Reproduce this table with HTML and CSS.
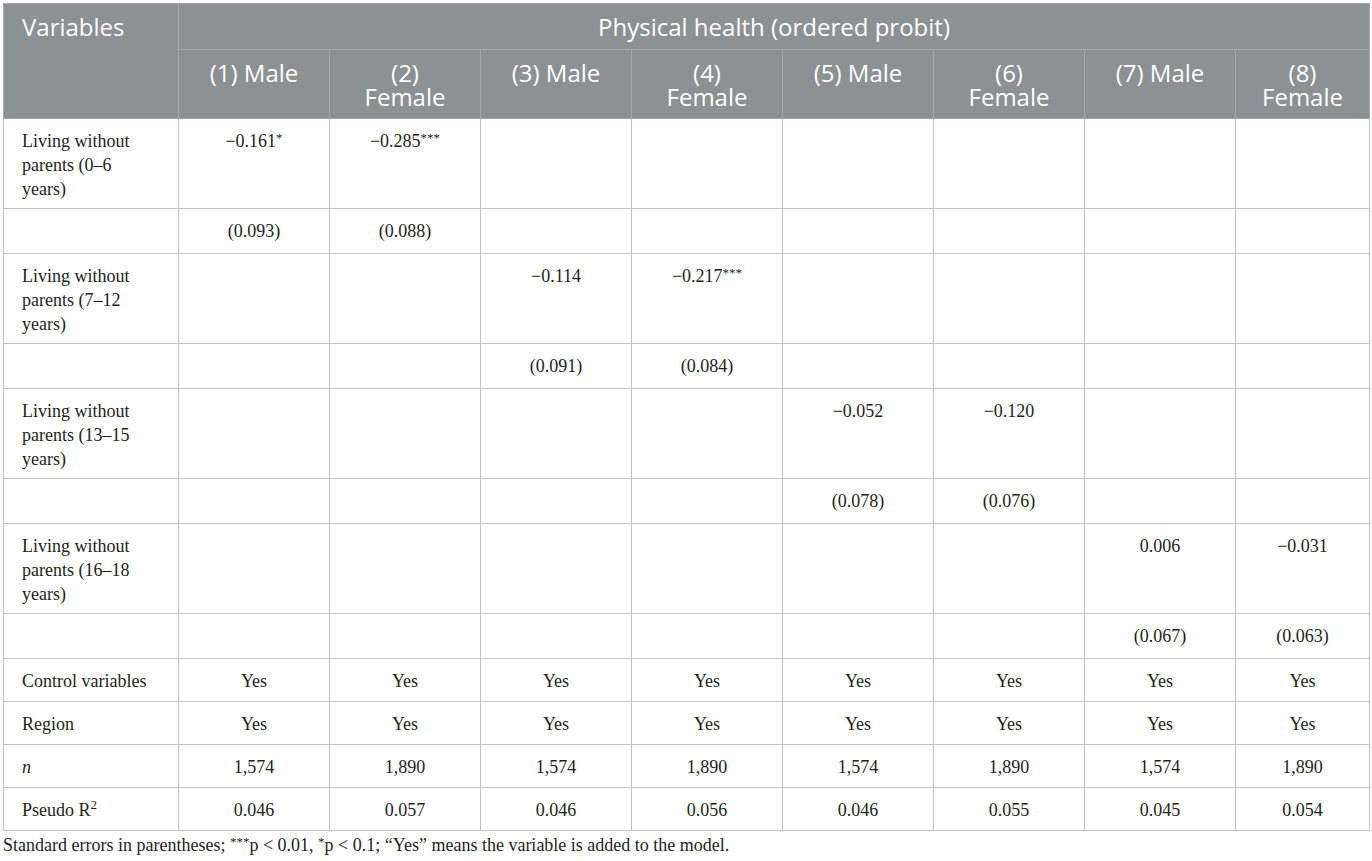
FILE: index.html
```html
<!DOCTYPE html>
<html lang="en">
<head>
  <meta charset="UTF-8" />
  <meta name="viewport" content="width=device-width, initial-scale=1" />
  <title>Physical health (ordered probit)</title>
  <link rel="stylesheet" href="styles.css">
</head>
<body>
  <table class="results">
    <colgroup>
      <col class="c-var">
      <col class="c-num"><col class="c-num"><col class="c-num"><col class="c-num">
      <col class="c-num"><col class="c-num"><col class="c-num">
      <col class="c-last">
    </colgroup>
    <thead>
      <tr class="h1">
        <th rowspan="2" class="left">Variables</th>
        <th colspan="8">Physical health (ordered probit)</th>
      </tr>
      <tr class="h2">
        <th>(1) Male</th>
        <th>(2)<br>Female</th>
        <th>(3) Male</th>
        <th>(4)<br>Female</th>
        <th>(5) Male</th>
        <th>(6)<br>Female</th>
        <th>(7) Male</th>
        <th>(8)<br>Female</th>
      </tr>
    </thead>
    <tbody>
      <tr class="coef">
        <td class="left">Living without parents (0–6 years)</td>
        <td>−0.161<sup>*</sup></td><td>−0.285<sup>***</sup></td>
        <td></td><td></td><td></td><td></td><td></td><td></td>
      </tr>
      <tr class="se">
        <td></td>
        <td>(0.093)</td><td>(0.088)</td>
        <td></td><td></td><td></td><td></td><td></td><td></td>
      </tr>
      <tr class="coef">
        <td class="left">Living without parents (7–12 years)</td>
        <td></td><td></td>
        <td>−0.114</td><td>−0.217<sup>***</sup></td>
        <td></td><td></td><td></td><td></td>
      </tr>
      <tr class="se">
        <td></td>
        <td></td><td></td>
        <td>(0.091)</td><td>(0.084)</td>
        <td></td><td></td><td></td><td></td>
      </tr>
      <tr class="coef">
        <td class="left">Living without parents (13–15 years)</td>
        <td></td><td></td><td></td><td></td>
        <td>−0.052</td><td>−0.120</td>
        <td></td><td></td>
      </tr>
      <tr class="se">
        <td></td>
        <td></td><td></td><td></td><td></td>
        <td>(0.078)</td><td>(0.076)</td>
        <td></td><td></td>
      </tr>
      <tr class="coef">
        <td class="left">Living without parents (16–18 years)</td>
        <td></td><td></td><td></td><td></td><td></td><td></td>
        <td>0.006</td><td>−0.031</td>
      </tr>
      <tr class="se">
        <td></td>
        <td></td><td></td><td></td><td></td><td></td><td></td>
        <td>(0.067)</td><td>(0.063)</td>
      </tr>
      <tr class="stat">
        <td class="left">Control variables</td>
        <td>Yes</td><td>Yes</td><td>Yes</td><td>Yes</td><td>Yes</td><td>Yes</td><td>Yes</td><td>Yes</td>
      </tr>
      <tr class="stat">
        <td class="left">Region</td>
        <td>Yes</td><td>Yes</td><td>Yes</td><td>Yes</td><td>Yes</td><td>Yes</td><td>Yes</td><td>Yes</td>
      </tr>
      <tr class="stat">
        <td class="left"><i>n</i></td>
        <td>1,574</td><td>1,890</td><td>1,574</td><td>1,890</td><td>1,574</td><td>1,890</td><td>1,574</td><td>1,890</td>
      </tr>
      <tr class="stat">
        <td class="left">Pseudo R<sup class="sq">2</sup></td>
        <td>0.046</td><td>0.057</td><td>0.046</td><td>0.056</td><td>0.046</td><td>0.055</td><td>0.045</td><td>0.054</td>
      </tr>
    </tbody>
  </table>

  <p class="note">Standard errors in parentheses; <sup>***</sup>p &lt; 0.01, <sup>*</sup>p &lt; 0.1; “Yes” means the variable is added to the model.</p>
</body>
</html>
```

FILE: styles.css
```css
body {
  margin: 0;
  padding: 3px 0 0 3px;
  background: #ffffff;
  color: #231f20;
  font-family: "Liberation Serif", "Times New Roman", serif;
}
.results {
  width: 1366px;
  table-layout: fixed;
  border-collapse: collapse;
  border: 1px solid #c2c2c2;
}
.c-var { width: 175px; }
.c-num { width: 151px; }
.c-last { width: 134px; }

th {
  background-color: #8c9194;
  color: #ffffff;
  font-family: "Open Sans", Lato, sans-serif;
  font-weight: 400;
  font-size: 24px;
  line-height: 24px;
  text-align: center;
  vertical-align: top;
  padding: 11px 6px 9px;
  border: 1px solid #a4a8aa;
}
.h1 th {
  height: 25px;
}
th.left {
  text-align: left;
  padding-left: 18px;
}

td {
  font-size: 18px;
  line-height: 24px;
  text-align: center;
  vertical-align: top;
  padding: 10px 8px 7px;
  border: 1px solid #c2c2c2;
}
td.left {
  text-align: left;
  padding-left: 18px;
  padding-right: 24px;
}
.se { height: 45px; }
.stat { height: 43px; }

sup {
  font-size: 13px;
  line-height: 0;
  vertical-align: 5px;
}
sup.sq {
  font-size: 13px;
  vertical-align: 7px;
}

.note {
  margin: 3px 0 0;
  font-size: 18px;
  line-height: 22px;
}
```
